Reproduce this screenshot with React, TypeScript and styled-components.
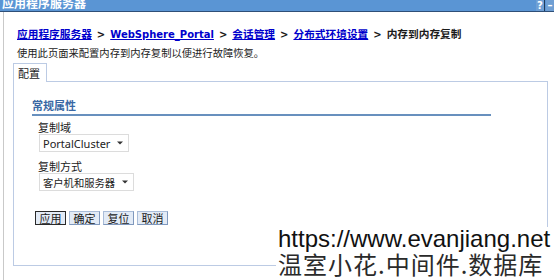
import { FunctionComponent } from "react";
import styled, { createGlobalStyle } from "styled-components";

const GlobalStyle = createGlobalStyle`
  html, body {
    margin: 0;
    padding: 0;
    background: #ffffff;
    overflow: hidden;
  }
`;

const cjk = `"Noto Sans CJK SC", "DejaVu Sans", sans-serif`;

const Frame = styled.div`
  position: relative;
  width: 554px;
  height: 280px;
  overflow: hidden;
  font-family: ${cjk};
  color: #1a1a1a;
`;

const TitleBar = styled.div`
  height: 11px;
  background-color: #5a95d4;
  border-bottom: 1px solid #2f4f78;
  display: flex;
  justify-content: space-between;
  overflow: hidden;
`;

const TitleText = styled.span`
  color: #ffffff;
  font-weight: bold;
  font-size: 12px;
  line-height: 12px;
  margin-top: -3px;
  padding-left: 2px;
`;

const TitleTools = styled.div`
  display: flex;
  align-items: stretch;
`;

const ToolButton = styled.span<{ $divider?: boolean }>`
  width: 8px;
  color: #ffffff;
  background-color: #6f9fd4;
  font: bold 10px/11px "DejaVu Sans", sans-serif;
  text-align: center;
  border-right: ${(p) => (p.$divider ? "1px solid #203a5a" : "none")};
  margin-right: ${(p) => (p.$divider ? "1px" : "0")};
`;

const Body = styled.div`
  margin-left: 3px;
  height: 264px;
  border-left: 1px solid #c9c9c9;
  border-bottom: 1px solid #c9c9c9;
  padding-left: 9px;
  padding-top: 15px;
  box-sizing: content-box;
`;

const Breadcrumb = styled.div`
  padding-left: 4px;
  font-size: 10.7px;
  font-weight: bold;
  line-height: 14px;
  white-space: nowrap;
`;

const Crumb = styled.a`
  color: #0000cc;
  text-decoration: underline;
`;

const LatinCrumb = styled(Crumb)`
  font-family: "DejaVu Sans", sans-serif;
  font-size: 10px;
`;

const Sep = styled.span`
  font-family: "DejaVu Sans", sans-serif;
  font-size: 10px;
  margin: 0 5px 0 5px;
`;

const Description = styled.div`
  padding-left: 4px;
  margin-top: 4px;
  font-size: 10.3px;
  line-height: 14px;
  color: #222222;
`;

const TabStrip = styled.div`
  display: flex;
  margin-top: 3px;
`;

const Tab = styled.div`
  position: relative;
  z-index: 1;
  height: 19px;
  width: 34px;
  padding-left: 4px;
  box-sizing: border-box;
  border: 1px solid #bccbe4;
  border-bottom: none;
  background: #ffffff;
  font-size: 11px;
  line-height: 19px;
  margin-bottom: -1px;
`;

const Panel = styled.div`
  width: 535px;
  height: 185px;
  box-sizing: border-box;
  border: 1px solid #bccbe4;
  padding: 16px 0 0 18px;
`;

const SectionTitle = styled.div`
  width: 459px;
  color: #3a68a4;
  font-size: 11px;
  font-weight: bold;
  line-height: 14px;
  padding-bottom: 2px;
  border-bottom: 2px solid #6890be;
`;

const Fields = styled.div`
  padding-left: 6px;
  margin-top: 5px;
  display: flex;
  flex-direction: column;
  gap: 8px;
`;

const Field = styled.div`
  display: flex;
  flex-direction: column;
  align-items: flex-start;
`;

const Label = styled.div`
  font-size: 11px;
  line-height: 12px;
  margin-bottom: 1px;
`;

const Select = styled.div<{ $latin?: boolean }>`
  margin-left: 1px;
  height: 18px;
  box-sizing: border-box;
  border: 1px solid #dcdcdc;
  display: inline-flex;
  align-items: center;
  gap: 7px;
  padding: 0 5px 0 3px;
  font-family: ${(p) => (p.$latin ? `"Noto Sans", sans-serif` : cjk)};
  font-size: ${(p) => (p.$latin ? "11px" : "10.3px")};
  color: #222222;
`;

const Caret = () => (
  <svg width="6" height="4" viewBox="0 0 6 4">
    <path d="M0 0.5 L6 0.5 L3 3.5 Z" fill="#333333" />
  </svg>
);

const Buttons = styled.div`
  display: flex;
  gap: 3px;
  margin-top: 20px;
  padding-left: 3px;
`;

const Button = styled.div<{ $focused?: boolean }>`
  width: 31px;
  height: 14px;
  box-sizing: border-box;
  background-color: #e3ebf6;
  border: 1px solid ${(p) => (p.$focused ? "#2a2a2a" : "#a9bcd8")};
  border-right-color: ${(p) => (p.$focused ? "#2a2a2a" : "#7f98bd")};
  border-bottom-color: ${(p) => (p.$focused ? "#2a2a2a" : "#7f98bd")};
  font-size: 11px;
  line-height: 12px;
  text-align: center;
  color: #1a1a1a;
`;

const Watermark = styled.div`
  position: absolute;
  left: 276px;
  top: 227px;
  width: 278px;
  height: 53px;
  background: #ffffff;
  padding-left: 2px;
  box-sizing: border-box;
`;

const WatermarkUrl = styled.div`
  font-family: "Liberation Sans", Arial, sans-serif;
  font-size: 24px;
  line-height: 24px;
  color: #111111;
  white-space: nowrap;
`;

const WatermarkName = styled.div`
  font-family: ${cjk};
  font-size: 24px;
  line-height: 26px;
  letter-spacing: 1px;
  color: #2a2a2a;
  white-space: nowrap;
`;

const App: FunctionComponent = () => {
  return (
    <Frame>
      <GlobalStyle />
      <TitleBar>
        <TitleText>应用程序服务器</TitleText>
        <TitleTools>
          <ToolButton $divider>?</ToolButton>
          <ToolButton>–</ToolButton>
        </TitleTools>
      </TitleBar>
      <Body>
        <Breadcrumb>
          <Crumb>应用程序服务器</Crumb>
          <Sep>&gt;</Sep>
          <LatinCrumb>WebSphere_Portal</LatinCrumb>
          <Sep>&gt;</Sep>
          <Crumb>会话管理</Crumb>
          <Sep>&gt;</Sep>
          <Crumb>分布式环境设置</Crumb>
          <Sep>&gt;</Sep>
          <span>内存到内存复制</span>
        </Breadcrumb>
        <Description>使用此页面来配置内存到内存复制以便进行故障恢复。</Description>
        <TabStrip>
          <Tab>配置</Tab>
        </TabStrip>
        <Panel>
          <SectionTitle>常规属性</SectionTitle>
          <Fields>
            <Field>
              <Label>复制域</Label>
              <Select $latin>
                PortalCluster
                <Caret />
              </Select>
            </Field>
            <Field>
              <Label>复制方式</Label>
              <Select>
                客户机和服务器
                <Caret />
              </Select>
            </Field>
          </Fields>
          <Buttons>
            <Button $focused>应用</Button>
            <Button>确定</Button>
            <Button>复位</Button>
            <Button>取消</Button>
          </Buttons>
        </Panel>
      </Body>
      <Watermark>
        <WatermarkUrl>https://www.evanjiang.net</WatermarkUrl>
        <WatermarkName>温室小花.中间件.数据库</WatermarkName>
      </Watermark>
    </Frame>
  );
};

export default App;
